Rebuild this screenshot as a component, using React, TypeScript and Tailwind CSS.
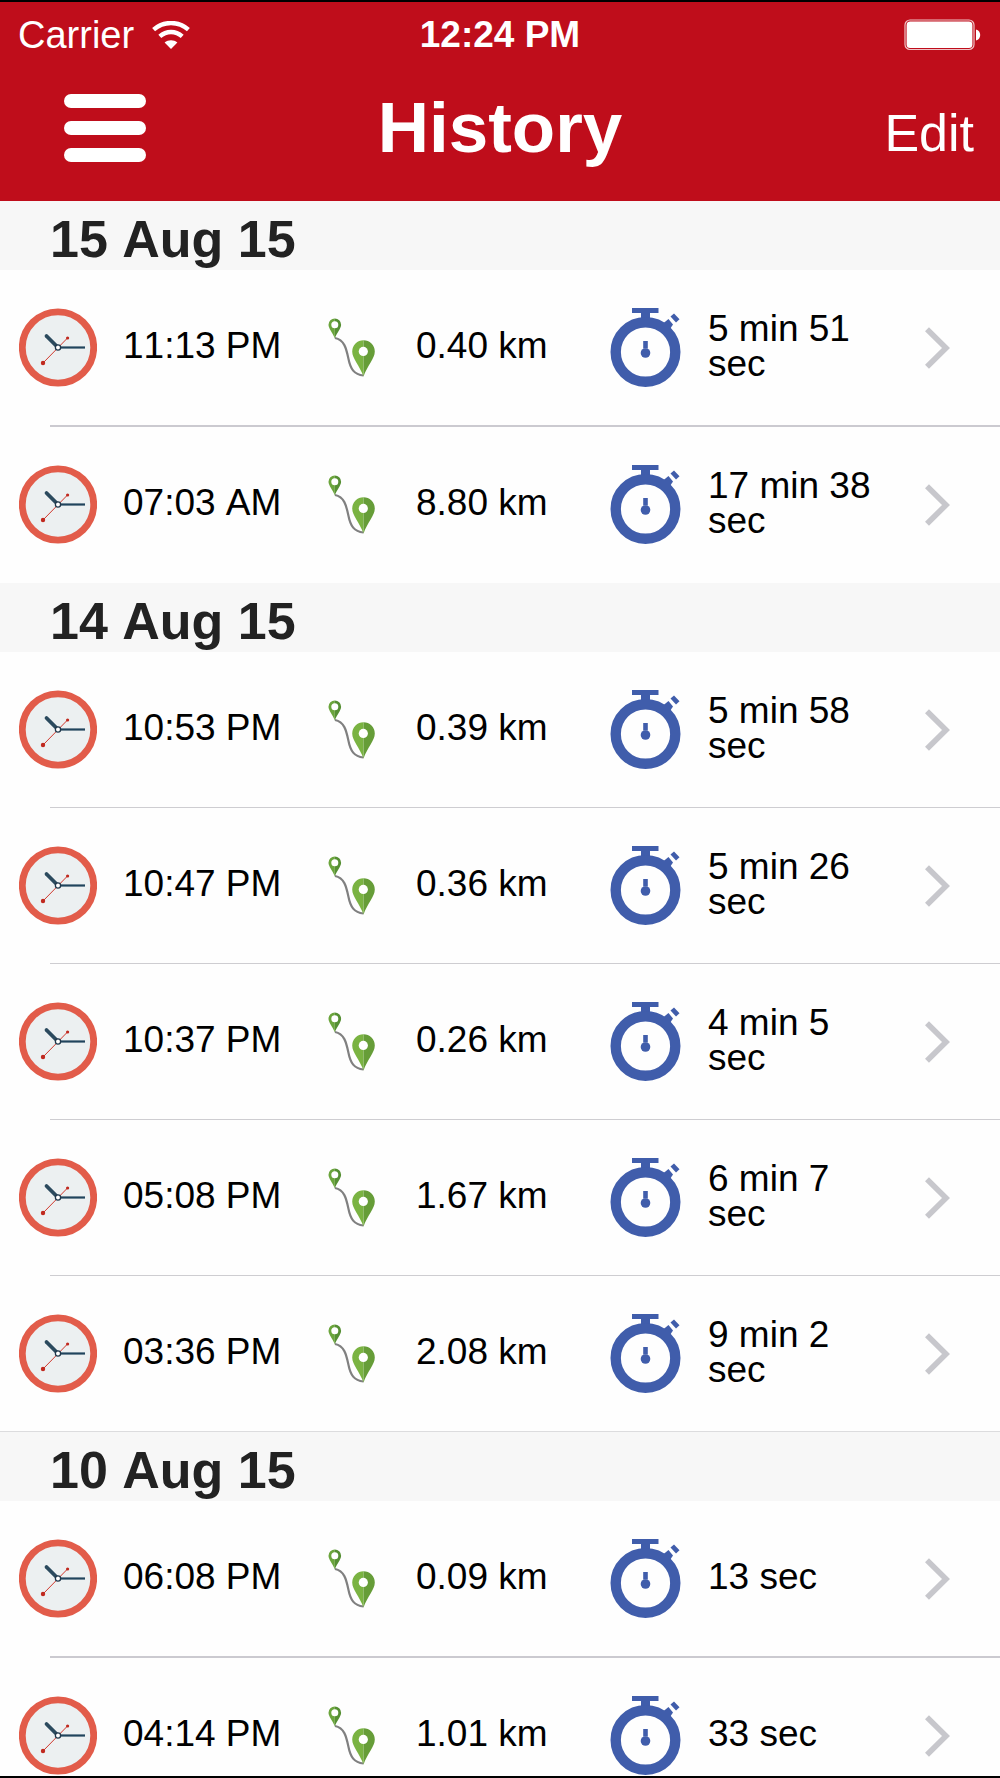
interface Run {
  time: string;
  distance: string;
  duration: string;
}

interface Day {
  date: string;
  rule: string;
  endRule: string;
  runs: Run[];
}

const days: Day[] = [
  {
    date: "15 Aug 15",
    rule: "h-0.5 bg-[#cbcad0]",
    endRule: "",
    runs: [
      { time: "11:13 PM", distance: "0.40 km", duration: "5 min 51 sec" },
      { time: "07:03 AM", distance: "8.80 km", duration: "17 min 38 sec" },
    ],
  },
  {
    date: "14 Aug 15",
    rule: "h-px bg-[#cecdd1]",
    endRule: "bg-[#dcdcde]",
    runs: [
      { time: "10:53 PM", distance: "0.39 km", duration: "5 min 58 sec" },
      { time: "10:47 PM", distance: "0.36 km", duration: "5 min 26 sec" },
      { time: "10:37 PM", distance: "0.26 km", duration: "4 min 5 sec" },
      { time: "05:08 PM", distance: "1.67 km", duration: "6 min 7 sec" },
      { time: "03:36 PM", distance: "2.08 km", duration: "9 min 2 sec" },
    ],
  },
  {
    date: "10 Aug 15",
    rule: "h-0.5 bg-[#cbcad0]",
    endRule: "",
    runs: [
      { time: "06:08 PM", distance: "0.09 km", duration: "13 sec" },
      { time: "04:14 PM", distance: "1.01 km", duration: "33 sec" },
    ],
  },
];

const WifiIcon = () => (
  <svg width="38" height="29" viewBox="0 0 38 29" fill="none" stroke="#fff">
    <path d="M1.6 8.6C11.5 -0.2 26.5 -0.2 36.4 8.6" strokeWidth="4.4" />
    <path d="M7.8 15.4C14.4 9.6 23.6 9.6 30.2 15.4" strokeWidth="4.4" />
    <path d="M12.6 21.6C16.4 18.4 21.6 18.4 25.4 21.6L19 28Z" fill="#fff" stroke="none" />
  </svg>
);

const BatteryIcon = () => (
  <svg width="78" height="32" viewBox="0 0 78 32">
    <rect x="1" y="1" width="69" height="29.5" rx="5" fill="none" stroke="#fff" strokeOpacity="0.75" strokeWidth="1.2" />
    <rect x="2.6" y="2.6" width="65.8" height="26.3" rx="3.5" fill="#fff" />
    <path d="M72 10.5C77.6 11.5 77.6 20.5 72 21.5Z" fill="#fff" />
  </svg>
);

const ClockIcon = () => (
  <svg className="shrink-0" width="78" height="79" viewBox="0 0 78 79">
    <circle cx="39" cy="39.5" r="35.7" fill="#ecf0f1" stroke="#e25c4a" strokeWidth="6.8" />
    <path d="M24.2 54.8L48.5 30" stroke="#d0382d" strokeWidth="1" />
    <circle cx="24" cy="55" r="2.2" fill="#c0291f" />
    <circle cx="48.6" cy="30" r="1.6" fill="#c0291f" />
    <path d="M39 39.5L27.5 28" stroke="#2b4a5e" strokeWidth="3.8" strokeLinecap="round" />
    <path d="M39 39.5H66" stroke="#20445d" strokeWidth="2.2" />
    <circle cx="39" cy="39.5" r="2.6" fill="#fff" stroke="#20384c" strokeWidth="1.3" />
  </svg>
);

const RouteIcon = () => (
  <svg className="shrink-0" width="48" height="60" viewBox="0 0 48 60">
    <path
      d="M7 20C17 22 18.5 32 20.5 41C22.5 51 26 56.5 35.5 57.5"
      fill="none"
      stroke="#808080"
      strokeWidth="2.2"
    />
    <path d="M6.8 0.5A6.3 6.3 0 0 0 0.5 6.8C0.5 10.5 4.5 14.5 6.8 20.5Z" fill="#6ba53c" />
    <path d="M6.8 0.5A6.3 6.3 0 0 1 13.1 6.8C13.1 10.5 9.1 14.5 6.8 20.5Z" fill="#558f33" />
    <circle cx="6.8" cy="6.8" r="3.5" fill="#fff" />
    <path d="M35.5 22.2A11.3 11.3 0 0 0 24.2 33.5C24.2 40.5 31.5 47.5 35.5 58.5Z" fill="#7ab342" />
    <path d="M35.5 22.2A11.3 11.3 0 0 1 46.8 33.5C46.8 40.5 39.5 47.5 35.5 58.5Z" fill="#669d38" />
    <circle cx="35.3" cy="33.4" r="4.6" fill="#fff" />
  </svg>
);

const StopwatchIcon = () => (
  <svg className="shrink-0" width="72" height="79" viewBox="0 0 72 79" fill="#405dab">
    <path d="M22 0H48.5V5H40V12H31V5H22Z" />
    <path d="M53 15.5L58.5 11L63 16.5L59 22.5Z" />
    <path d="M60.5 8.5L64 5.5L69.5 11.2L66 14.5Z" />
    <circle cx="35.5" cy="44" r="29.8" fill="none" stroke="#405dab" strokeWidth="10.4" />
    <path d="M33.2 33H37.8V40.5H33.2Z" />
    <circle cx="35.5" cy="45" r="4.8" />
  </svg>
);

const ChevronIcon = () => (
  <svg width="26" height="42" viewBox="0 0 26 42" fill="none" stroke="#c7c7cc" strokeWidth="5.6">
    <path d="M2 2.2L21 21L2 39.8" />
  </svg>
);

const RunRow = ({ run }: { run: Run }) => (
  <a
    href="#"
    className="grid h-[155px] grid-cols-[309fr_282fr_315fr_75fr] items-center pl-[19px] text-[37px] leading-[35px] text-black"
  >
    <span className="flex items-center gap-[26px]">
      <ClockIcon />
      <span className="pb-1 whitespace-nowrap">{run.time}</span>
    </span>
    <span className="flex items-center gap-10">
      <RouteIcon />
      <span className="pb-1 whitespace-nowrap">{run.distance}</span>
    </span>
    <span className="flex items-center gap-[26px]">
      <StopwatchIcon />
      <span className="max-w-[176px] pb-1">{run.duration}</span>
    </span>
    <ChevronIcon />
  </a>
);

const DaySection = ({ day }: { day: Day }) => (
  <section>
    <h2 className="h-[69px] bg-[#f7f7f7] pl-[50px] pt-2 text-[52px] leading-[60px] font-bold text-[#222]">
      {day.date}
    </h2>
    <ul>
      {day.runs.map((run, i) => (
        <li key={run.time}>
          <RunRow run={run} />
          {i < day.runs.length - 1 ? (
            <div className={`ml-[50px] ${i === 0 ? day.rule : "h-px bg-[#cecdd1]"}`} />
          ) : (
            <div className={`h-px ${day.endRule}`} />
          )}
        </li>
      ))}
    </ul>
  </section>
);

const App = () => {
  return (
    <div className="flex h-screen flex-col overflow-hidden border-y-2 border-black bg-[#fefefe] font-['Liberation_Sans',Arial,sans-serif] [font-kerning:none]">
      <header className="shrink-0 bg-[#bf0d1b] pb-9 text-white">
        {/* Status bar */}
        <div className="grid grid-cols-[1fr_auto_1fr] items-center pt-[13px] px-[18px] leading-10">
          <div className="flex items-center gap-[18px] text-[38px]">
            Carrier
            <WifiIcon />
          </div>
          <div className="text-[37px] font-bold">12:24 PM</div>
          <div className="flex justify-end">
            <BatteryIcon />
          </div>
        </div>
        {/* Nav bar */}
        <div className="mt-[35px] grid grid-cols-[1fr_auto_1fr] items-end px-[26px]">
          <button type="button" aria-label="Menu" className="mb-[3px] ml-[38px] flex w-[82px] flex-col gap-[13px]">
            <span className="h-3.5 rounded-full bg-white" />
            <span className="h-3.5 rounded-full bg-white" />
            <span className="h-3.5 rounded-full bg-white" />
          </button>
          <h1 className="text-[71px] leading-[75px] font-bold">History</h1>
          <button type="button" className="mb-0.5 justify-self-end text-[52px] leading-[60px]">
            Edit
          </button>
        </div>
      </header>
      <main className="min-h-0 flex-1 overflow-hidden">
        {days.map((day) => (
          <DaySection key={day.date} day={day} />
        ))}
      </main>
    </div>
  );
};

export default App;
